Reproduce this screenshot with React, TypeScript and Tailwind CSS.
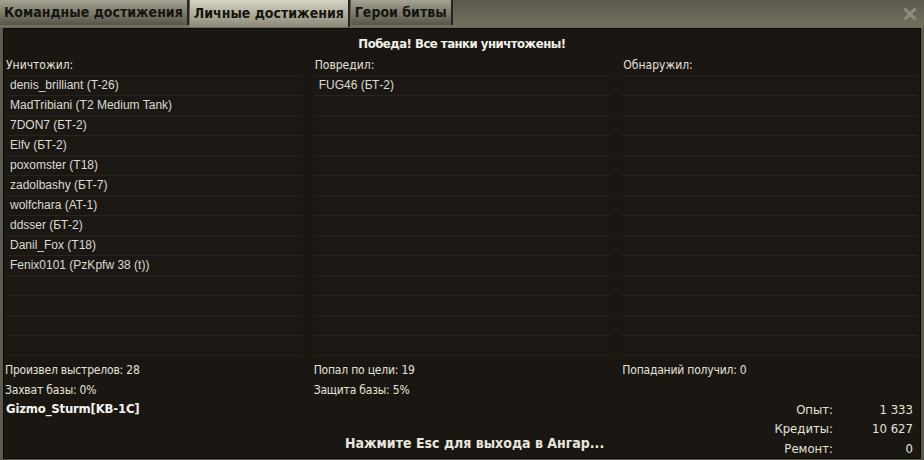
const narrow = "font-['Liberation_Sans_Narrow','DejaVu_Sans_Condensed','Roboto_Condensed',sans-serif]";

const killed = [
  "denis_brilliant (T-26)",
  "MadTribiani (T2 Medium Tank)",
  "7DON7 (БТ-2)",
  "Elfv (БТ-2)",
  "poxomster (T18)",
  "zadolbashy (БТ-7)",
  "wolfchara (AT-1)",
  "ddsser (БТ-2)",
  "Danil_Fox (T18)",
  "Fenix0101 (PzKpfw 38 (t))",
];
const damaged = ["FUG46 (БТ-2)"];
const spotted: string[] = [];

const ROWS = 14;

function List({ title, items }: { title: string; items: string[] }) {
  const rows = Array.from({ length: ROWS }, (_, i) => items[i] ?? "");
  return (
    <div className="flex flex-col">
      <div className={`${narrow} h-[19px] pl-[1px] text-[12px] leading-[19px] text-[#e4e2da]`}>{title}</div>
      <div className="flex flex-col gap-[1px] bg-[#28241f] py-[1px]">
        {rows.map((r, i) => (
          <div
            key={i}
            className="h-[19px] bg-[#1b1814] pl-[5px] font-['Liberation_Sans',sans-serif] text-[12px] leading-[19px] text-[#dcdad2]"
          >
            {r}
          </div>
        ))}
      </div>
    </div>
  );
}

function Tab({ label, active }: { label: string; active?: boolean }) {
  return (
    <div
      className={`${narrow} flex items-center border-r-2 border-[#25231f] px-[4px] text-[14px] font-bold text-[#151410] ${
        active
          ? "h-[27px] bg-gradient-to-b from-[#d6d3c2] to-[#8e8a79]"
          : "h-[25px] bg-gradient-to-b from-[#a7a392] to-[#57544a]"
      }`}
    >
      {label}
    </div>
  );
}

export default function App() {
  return (
    <div className="flex h-[460px] w-[924px] flex-col bg-[#5d5a4e]">
      {/* tab bar */}
      <div className="flex h-[27px] items-start bg-gradient-to-b from-[#5c594d] to-[#75715f]">
        <Tab label="Командные достижения" />
        <div className="w-[1px]" />
        <Tab label="Личные достижения" active />
        <div className="w-[1px]" />
        <Tab label="Герои битвы" />
        <div className="flex-1" />
        <svg width="12" height="12" viewBox="0 0 12 12" className="mr-[8px] mt-[8px]">
          <path d="M1.5 1.5 L10.5 10.5 M10.5 1.5 L1.5 10.5" stroke="#8f8c80" strokeWidth="3" strokeLinecap="square" />
        </svg>
      </div>
      <div className="h-[4px] bg-[#6c6859]" />

      {/* main panel */}
      <div className="mx-[3px] flex flex-1 flex-col border border-[#0c0b09] bg-[#1a1713] px-[1px] text-[#e4e2da]">
        <div className={`${narrow} h-[27px] pt-[5px] text-center text-[13px] font-bold leading-[20px] tracking-[-0.5px] text-[#f0efe8]`}>
          Победа! Все танки уничтожены!
        </div>
        <div className="grid grid-cols-3 gap-x-[12px]">
          <List title="Уничтожил:" items={killed} />
          <List title="Повредил:" items={damaged} />
          <List title="Обнаружил:" items={spotted} />
        </div>

        <div className={`${narrow} mt-[4px] grid grid-cols-3 gap-x-[12px] text-[12px] leading-[20px] tracking-[-0.2px]`}>
          <div>Произвел выстрелов: 28</div>
          <div>Попал по цели: 19</div>
          <div>Попаданий получил: 0</div>
          <div>Захват базы: 0%</div>
          <div>Защита базы: 5%</div>
          <div />
        </div>

        <div className="flex flex-1 items-start">
          <div className={`${narrow} w-[300px] pl-[1px] text-[13px] font-bold leading-[18px] tracking-[-0.2px] text-[#f4f3ee]`}>
            Gizmo_Sturm[KB-1C]
          </div>
          <div className={`${narrow} flex-1 self-end pb-[5px] pl-[40px] text-[14px] font-bold leading-[20px] text-[#e8e6de]`}>
            Нажмите Esc для выхода в Ангар...
          </div>
          <div className={`${narrow} mr-[6px] grid grid-cols-[auto_80px] text-right text-[13px] leading-[19.5px]`}>
            <div>Опыт:</div>
            <div>1 333</div>
            <div>Кредиты:</div>
            <div>10 627</div>
            <div>Ремонт:</div>
            <div>0</div>
          </div>
        </div>
      </div>
      <div className="h-[4px]" />
    </div>
  );
}
